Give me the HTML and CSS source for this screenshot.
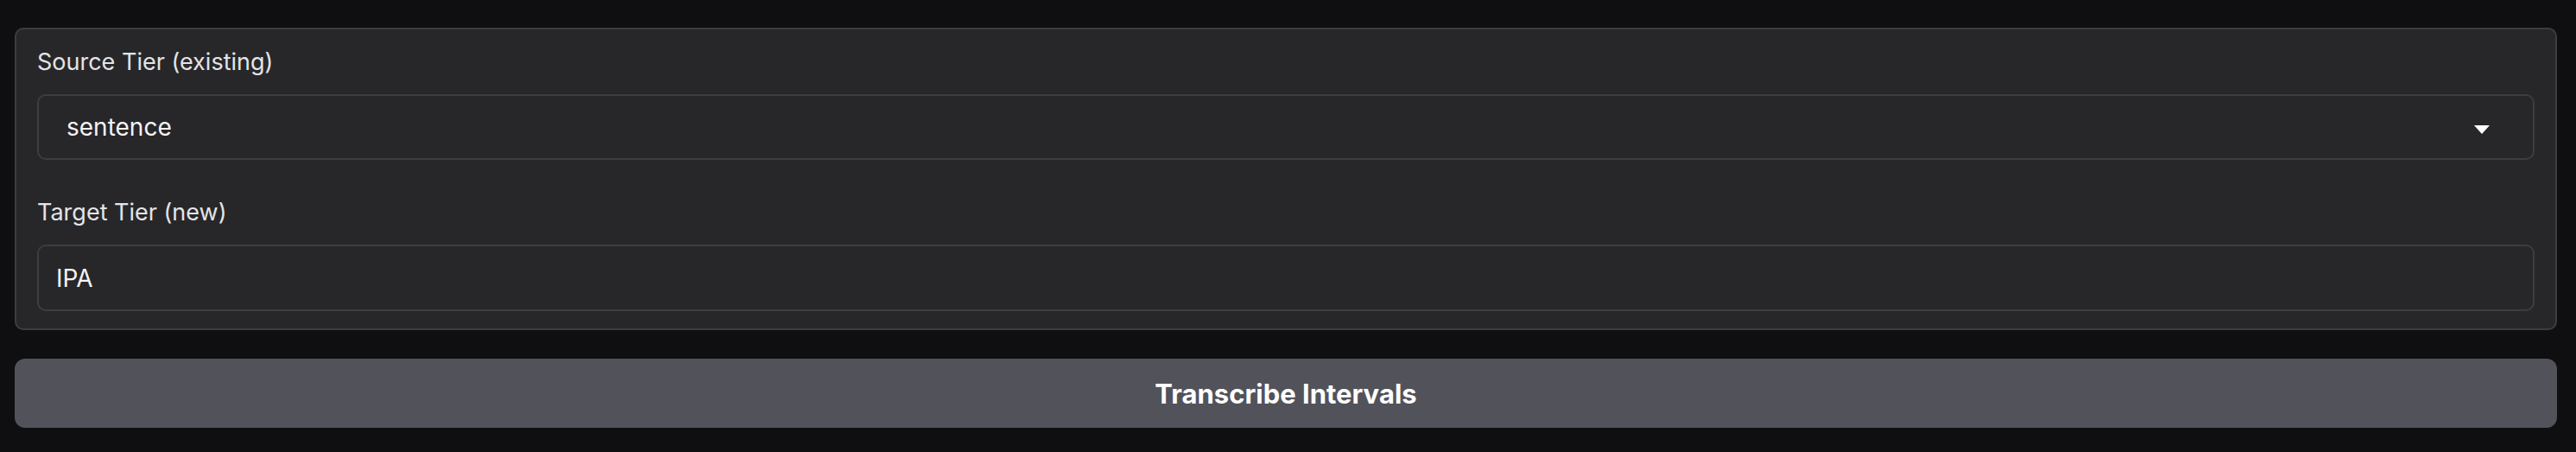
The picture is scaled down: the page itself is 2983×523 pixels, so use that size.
FILE: index.html
```html
<!DOCTYPE html>
<html lang="en">
<head>
<meta charset="utf-8">
<title>Transcribe Intervals</title>
<link rel="stylesheet" href="styles.css">
</head>
<body>
  <div class="page">
    <div class="panel">
      <label class="field">
        <span class="label">Source Tier (existing)</span>
        <div class="select">
          <span class="value">sentence</span>
          <svg class="caret" width="18" height="10" viewBox="0 0 18 10"><path d="M0 0H18L9 10Z" fill="#ffffff"/></svg>
        </div>
      </label>
      <label class="field">
        <span class="label">Target Tier (new)</span>
        <div class="input"><span class="value">IPA</span></div>
      </label>
    </div>
    <button class="btn">Transcribe Intervals</button>
  </div>
</body>
</html>
```

FILE: styles.css
```css
html, body {
  margin: 0;
  padding: 0;
  background: #0f0f11;
}
body {
  font-family: Inter, "Noto Sans", sans-serif;
  color: #f4f4f5;
}
.page {
  padding: 32px 22px 28px 17px;
  display: flex;
  flex-direction: column;
  gap: 33px;
}
.panel {
  background: #27272a;
  border: 2px solid #3c3c42;
  border-radius: 10px;
  padding: 18px 24px 20px 24px;
  display: flex;
  flex-direction: column;
  gap: 41px;
}
.field {
  display: flex;
  flex-direction: column;
  gap: 17px;
}
.label {
  font-size: 27px;
  line-height: 40px;
  color: #e4e4e7;
}
.select, .input {
  border: 2px solid #3c3c42;
  border-radius: 10px;
  display: flex;
  align-items: center;
  box-sizing: content-box;
}
.select {
  height: 72px;
  padding: 0 50px 0 32px;
  justify-content: space-between;
}
.input {
  height: 73px;
  padding: 0 20px;
}
.value {
  font-size: 28px;
  color: #f4f4f5;
}
.caret {
  display: block;
  margin-top: 5px;
}
.btn {
  height: 80px;
  border: none;
  border-radius: 12px;
  background: #52525b;
  color: #ffffff;
  font-family: Inter, "Noto Sans", sans-serif;
  font-size: 31px;
  font-weight: 700;
  padding: 0;
}
```
